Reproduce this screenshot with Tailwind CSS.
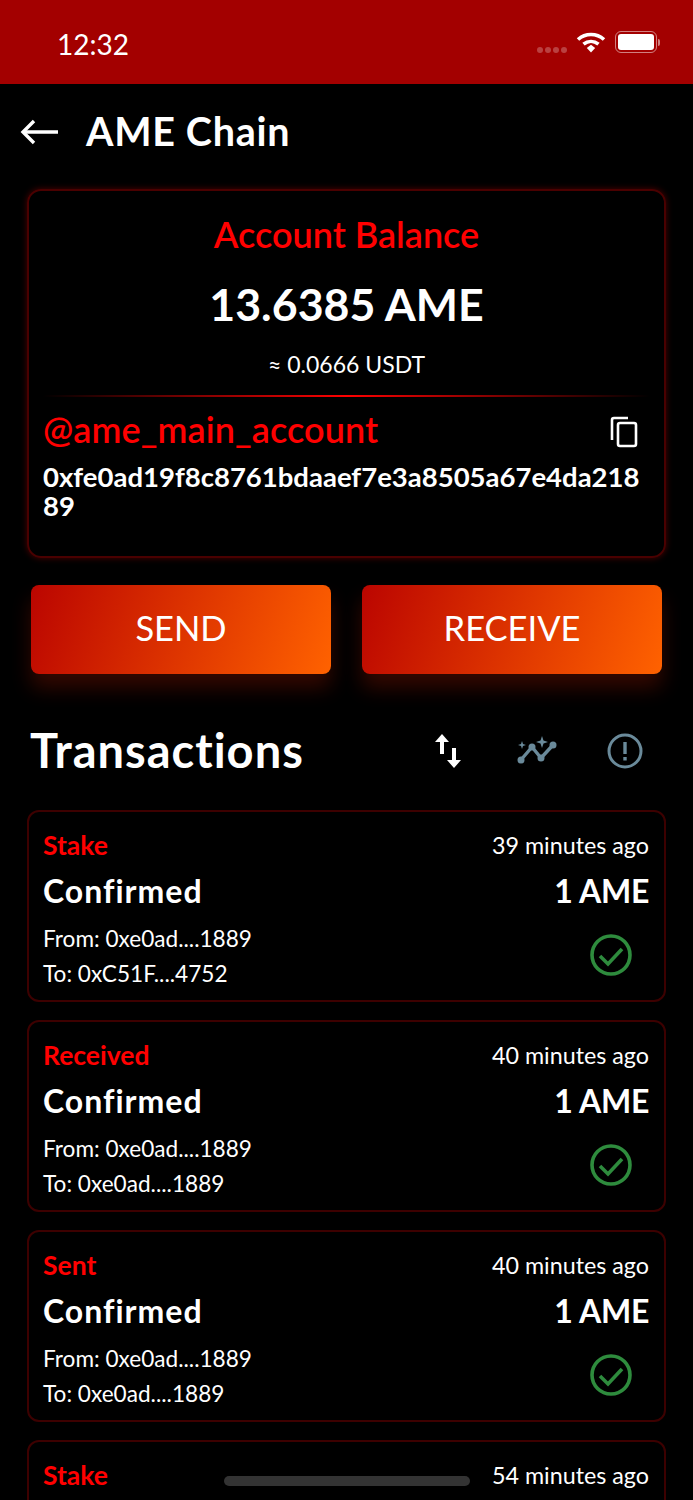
<!DOCTYPE html>
<html lang="en">
  <head>
    <meta charset="UTF-8" />
    <title>AME Chain</title>
    <script src="https://cdn.jsdelivr.net/npm/@tailwindcss/browser@4"></script>
  </head>
  <body class="bg-black">
    <div class="relative h-[1500px] w-[693px] overflow-hidden bg-black text-white font-['Lato',sans-serif]">
      <!-- status bar -->
      <div class="flex h-[84px] items-center justify-between bg-[#a30000] pl-[57px] pr-[33px]">
        <span class="mt-[3px] text-[28px] font-normal leading-none">12:32</span>
        <div class="flex items-center">
          <div class="mt-[15px] flex gap-[2px]">
            <span class="h-[6px] w-[6px] rounded-full bg-white/25"></span>
            <span class="h-[6px] w-[6px] rounded-full bg-white/25"></span>
            <span class="h-[6px] w-[6px] rounded-full bg-white/25"></span>
            <span class="h-[6px] w-[6px] rounded-full bg-white/25"></span>
          </div>
          <svg class="ml-[9px]" width="30" height="22" viewBox="0 0 30 22">
            <path d="M2 8.5C9.5 1.8 20.5 1.8 28 8.5" fill="none" stroke="white" stroke-width="3.6" />
            <path d="M7.5 13.2C12 9.5 18 9.5 22.5 13.2" fill="none" stroke="white" stroke-width="3.6" />
            <path d="M10.8 17L15 13.8L19.2 17L15 21.5Z" fill="white" />
          </svg>
          <div class="ml-[9px] flex h-[22px] w-[42px] items-center rounded-[6px] border-[1.5px] border-white/50 p-[2px]">
            <div class="h-full w-full rounded-[3px] bg-white"></div>
          </div>
          <div class="ml-[1px] h-[7px] w-[2px] rounded-r-full bg-white/50"></div>
        </div>
      </div>

      <!-- header -->
      <div class="flex h-[96px] items-center pl-[20px]">
        <svg width="38" height="26" viewBox="0 0 38 26" fill="none" stroke="white" stroke-width="3.4">
          <path d="M38 13H3" />
          <path d="M14 2L3 13L14 24" />
        </svg>
        <h1 class="mb-[3px] ml-[28px] text-[39.5px] font-bold leading-none tracking-[0.7px]">AME Chain</h1>
      </div>

      <!-- balance card -->
      <div class="mx-[27px] mt-[9px] h-[369px] rounded-[14px] border-2 border-[#4a0000] pt-[21px] shadow-[0_0_6px_rgba(255,0,0,0.3)]">
        <p class="text-center text-[36px] font-semibold leading-[44px] text-[#ff0000]">Account Balance</p>
        <p class="mt-[23px] text-center text-[44.7px] font-bold leading-[50px]">13.6385 AME</p>
        <p class="mt-[20px] text-center text-[23px] leading-[30px]">≈ 0.0666 USDT</p>
        <div class="mx-[14px] mt-[16px] h-[2px] bg-[linear-gradient(to_right,#000,#ff0000_50%,#000)]"></div>
        <div class="mt-[10px] flex items-center justify-between pl-[14px] pr-[26px]">
          <p class="text-[36px] font-semibold leading-[44px] tracking-[0.1px] text-[#ff0000]">@ame_main_account</p>
          <svg class="mt-[6px]" width="28" height="32" viewBox="0 0 28 32" fill="none" stroke="white" stroke-width="2.6">
            <rect x="8" y="7" width="18" height="23" rx="2" />
            <path d="M2 24V4C2 2.5 2.5 2 4 2H18" />
          </svg>
        </div>
        <p class="ml-[14px] mr-[22px] mt-[11px] break-all text-[27.5px] font-bold leading-[29px]">0xfe0ad19f8c8761bdaaef7e3a8505a67e4da21889</p>
      </div>

      <!-- buttons -->
      <div class="mt-[27px] flex justify-between px-[31px]">
        <button class="h-[89px] w-[300px] rounded-[8px] bg-[linear-gradient(110deg,#bb0500,#ff6200)] pb-[4px] text-[34.5px] shadow-[0_14px_20px_rgba(255,40,0,0.2)]">SEND</button>
        <button class="h-[89px] w-[300px] rounded-[8px] bg-[linear-gradient(110deg,#bb0500,#ff6200)] pb-[4px] text-[34.5px] shadow-[0_14px_20px_rgba(255,40,0,0.2)]">RECEIVE</button>
      </div>

      <!-- transactions title -->
      <div class="mt-[44px] flex h-[68px] items-center pl-[30px]">
        <h2 class="mb-[4px] flex-1 text-[47px] font-bold leading-none tracking-[1px]">Transactions</h2>
        <div class="mb-[2px] flex items-center pr-[50px]">
          <svg width="26" height="34" viewBox="0 0 26 34" fill="white">
            <path d="M7 0L14 8H9V20H5V8H0Z" />
            <path d="M19 34L26 26H21V14H17V26H12Z" />
          </svg>
          <svg class="ml-[56px]" width="40" height="30" viewBox="0 0 40 30" fill="none" stroke="#6a8a9a" stroke-width="3.4">
            <path d="M3 25L15 11L24 22L36 9" stroke-linejoin="round" />
            <circle cx="4" cy="24" r="3.5" fill="#6a8a9a" stroke="none" />
            <circle cx="15" cy="11" r="3.5" fill="#6a8a9a" stroke="none" />
            <circle cx="24" cy="22" r="3.5" fill="#6a8a9a" stroke="none" />
            <circle cx="36" cy="9" r="3.5" fill="#6a8a9a" stroke="none" />
            <path d="M25 0L26.5 4.5L31 6L26.5 7.5L25 12L23.5 7.5L19 6L23.5 4.5Z" fill="#6a8a9a" stroke="none" />
            <path d="M5 5L6 8L9 9L6 10L5 13L4 10L1 9L4 8Z" fill="#6a8a9a" stroke="none" />
          </svg>
          <svg class="ml-[50px]" width="36" height="36" viewBox="0 0 36 36" fill="none" stroke="#6a8a9a" stroke-width="3">
            <circle cx="18" cy="18" r="16" />
            <path d="M18 9V21" stroke-width="3.4" />
            <path d="M18 24V27.5" stroke-width="3.4" />
          </svg>
        </div>
      </div>

      <!-- transaction list -->
      <div class="mt-[24px] flex flex-col gap-[18px] px-[27px]">
        <div class="h-[192px] rounded-[12px] border-2 border-[#3d0000] pl-[14px] pr-[15px] pt-[18px]">
          <div class="flex items-center justify-between">
            <span class="text-[26.5px] font-bold leading-[30px] text-[#ff0000]">Stake</span>
            <span class="text-[23.3px] leading-[30px]">39 minutes ago</span>
          </div>
          <div class="mt-[14px] flex items-center justify-between text-[32px] font-bold leading-[34px]">
            <span class="tracking-[1px]">Confirmed</span>
            <span class="tracking-[-0.3px]">1 AME</span>
          </div>
          <div class="mt-[13px] flex items-center justify-between">
            <div class="text-[22.6px] leading-[35px]">
              <p>From: 0xe0ad....1889</p>
              <p>To: 0xC51F....4752</p>
            </div>
            <svg class="mb-[3px] mr-[17px]" width="42" height="42" viewBox="0 0 42 42" fill="none" stroke="#2e8b3d" stroke-width="3.6">
              <circle cx="21" cy="21" r="19" />
              <path d="M10 22L18 30L32 15" />
            </svg>
          </div>
        </div>
        <div class="h-[192px] rounded-[12px] border-2 border-[#3d0000] pl-[14px] pr-[15px] pt-[18px]">
          <div class="flex items-center justify-between">
            <span class="text-[26.5px] font-bold leading-[30px] text-[#ff0000]">Received</span>
            <span class="text-[23.3px] leading-[30px]">40 minutes ago</span>
          </div>
          <div class="mt-[14px] flex items-center justify-between text-[32px] font-bold leading-[34px]">
            <span class="tracking-[1px]">Confirmed</span>
            <span class="tracking-[-0.3px]">1 AME</span>
          </div>
          <div class="mt-[13px] flex items-center justify-between">
            <div class="text-[22.6px] leading-[35px]">
              <p>From: 0xe0ad....1889</p>
              <p>To: 0xe0ad....1889</p>
            </div>
            <svg class="mb-[3px] mr-[17px]" width="42" height="42" viewBox="0 0 42 42" fill="none" stroke="#2e8b3d" stroke-width="3.6">
              <circle cx="21" cy="21" r="19" />
              <path d="M10 22L18 30L32 15" />
            </svg>
          </div>
        </div>
        <div class="h-[192px] rounded-[12px] border-2 border-[#3d0000] pl-[14px] pr-[15px] pt-[18px]">
          <div class="flex items-center justify-between">
            <span class="text-[26.5px] font-bold leading-[30px] text-[#ff0000]">Sent</span>
            <span class="text-[23.3px] leading-[30px]">40 minutes ago</span>
          </div>
          <div class="mt-[14px] flex items-center justify-between text-[32px] font-bold leading-[34px]">
            <span class="tracking-[1px]">Confirmed</span>
            <span class="tracking-[-0.3px]">1 AME</span>
          </div>
          <div class="mt-[13px] flex items-center justify-between">
            <div class="text-[22.6px] leading-[35px]">
              <p>From: 0xe0ad....1889</p>
              <p>To: 0xe0ad....1889</p>
            </div>
            <svg class="mb-[3px] mr-[17px]" width="42" height="42" viewBox="0 0 42 42" fill="none" stroke="#2e8b3d" stroke-width="3.6">
              <circle cx="21" cy="21" r="19" />
              <path d="M10 22L18 30L32 15" />
            </svg>
          </div>
        </div>
        <div class="h-[192px] rounded-[12px] border-2 border-[#3d0000] pl-[14px] pr-[15px] pt-[18px]">
          <div class="flex items-center justify-between">
            <span class="text-[26.5px] font-bold leading-[30px] text-[#ff0000]">Stake</span>
            <span class="text-[23.3px] leading-[30px]">54 minutes ago</span>
          </div>
        </div>
      </div>

      <!-- home indicator -->
      <div class="absolute left-[224px] top-[1476px] h-[10px] w-[246px] rounded-full bg-[#333333]"></div>
    </div>
  </body>
</html>
